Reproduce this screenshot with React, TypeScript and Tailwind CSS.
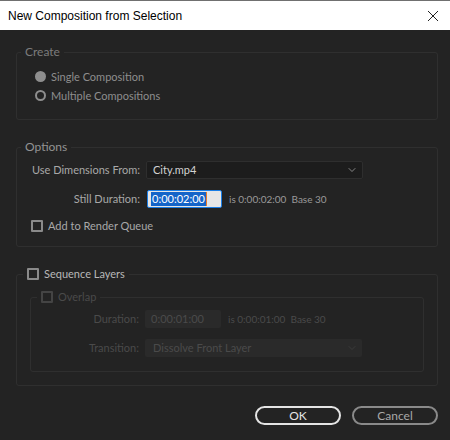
import { ChevronDown } from 'lucide-react';

const body = "font-['Lato','Noto_Sans',sans-serif]";

function Radio({ checked, label }: { checked?: boolean; label: string }) {
  return (
    <div className="flex items-center h-[19px] gap-[5px]">
      {checked ? (
        <span className="w-[11px] h-[11px] rounded-full bg-[#8e8e8e]" />
      ) : (
        <span className="w-[11px] h-[11px] rounded-full border-2 border-[#8e8e8e]" />
      )}
      <span className="text-[#8e8e8e]">{label}</span>
    </div>
  );
}

function Checkbox({ label, color, box }: { label: string; color: string; box: string }) {
  return (
    <div className="flex items-center gap-[5px]">
      <span className={`w-[12px] h-[12px] rounded-[1px] border-2 ${box}`} />
      <span className={color}>{label}</span>
    </div>
  );
}

export default function App() {
  return (
    <div className={`w-[450px] h-[440px] bg-[#232323] overflow-hidden text-[11px] leading-[16px] whitespace-nowrap ${body}`}>
      {/* title bar */}
      <div className="h-[30px] bg-white border-t border-[#707070] flex items-center justify-between pl-[8px] pr-[11px]">
        <span className="text-[12px] text-black font-['Liberation_Sans',sans-serif]">New Composition from Selection</span>
        <svg width="12" height="12" viewBox="0 0 12 12" className="text-[#222]">
          <path d="M1 1 L11 11 M11 1 L1 11" stroke="currentColor" strokeWidth="1" />
        </svg>
      </div>

      <div className="pl-[16px] pr-[12px]">
        {/* Create */}
        <fieldset className="mt-[14px] border border-[#2f2f2f] rounded-[3px]">
          <legend className="ml-[4px] px-[4px] text-[#7c7c7c] text-[12px]">Create</legend>
          <div className="pl-[18px] pt-[7px] pb-[14px]">
            <Radio checked label="Single Composition" />
            <Radio label="Multiple Compositions" />
          </div>
        </fieldset>

        {/* Options */}
        <fieldset className="mt-[19px] border border-[#2f2f2f] rounded-[3px]">
          <legend className="ml-[4px] px-[4px] text-[#939393] text-[12px]">Options</legend>
          <div className="pl-[14px] pt-[6px] pb-[12px]">
            <div className="flex items-center gap-[6px]">
              <span className="w-[109px] text-right text-[#a8a8a8]">Use Dimensions From:</span>
              <div className="w-[217px] h-[18px] bg-[#1c1c1c] border border-[#2e2e2e] rounded-[2px] flex items-center justify-between pl-[6px] pr-[4px]">
                <span className="text-[#d2d2d2]">City.mp4</span>
                <ChevronDown className="w-[12px] h-[12px] text-[#a8a8a8]" strokeWidth={1.5} />
              </div>
            </div>
            <div className="flex items-center gap-[7px] mt-[11px]">
              <span className="w-[109px] text-right text-[#a8a8a8]">Still Duration:</span>
              <div className="w-[75px] h-[18px] bg-[#e6e6e6] border border-[#1a7ee6] rounded-[2px] flex items-center pl-[3px]">
                <span className="bg-[#1464c8] text-white px-[1px] leading-[14px]">0:00:02:00</span>
                <span className="w-[1px] h-[14px] bg-[#e87a2a]" />
              </div>
              <span className="text-[10px] text-[#9a9a9a]">is 0:00:02:00&nbsp;&nbsp;Base 30</span>
            </div>
            <div className="mt-[10px]">
              <Checkbox label="Add to Render Queue" color="text-[#a8a8a8]" box="border-[#8a8a8a]" />
            </div>
          </div>
        </fieldset>

        {/* Sequence Layers */}
        <fieldset className="mt-[19px] border border-[#2f2f2f] rounded-[3px]">
          <legend className="ml-[6px] px-[4px]">
            <Checkbox label="Sequence Layers" color="text-[#b8b8b8]" box="border-[#8a8a8a]" />
          </legend>
          <div className="px-[13px] pt-[7px] pb-[13px]">
            <fieldset className="border border-[#2f2f2f] rounded-[3px]">
              <legend className="ml-[6px] px-[4px]">
                <Checkbox label="Overlap" color="text-[#4a4a4a]" box="border-[#444]" />
              </legend>
              <div className="pt-[5px] pb-[14px]">
                <div className="flex items-center gap-[6px]">
                  <span className="w-[108px] text-right text-[#4a4a4a]">Duration:</span>
                  <div className="w-[76px] h-[18px] bg-[#2a2a2a] rounded-[2px] flex items-center pl-[6px] text-[#4a4a4a]">
                    0:00:01:00
                  </div>
                  <span className="ml-[1px] text-[10px] text-[#4a4a4a]">is 0:00:01:00&nbsp;&nbsp;Base 30</span>
                </div>
                <div className="flex items-center gap-[6px] mt-[11px]">
                  <span className="w-[108px] text-right text-[#4a4a4a]">Transition:</span>
                  <div className="w-[217px] h-[18px] bg-[#2a2a2a] rounded-[2px] flex items-center justify-between pl-[8px] pr-[4px]">
                    <span className="text-[#4a4a4a]">Dissolve Front Layer</span>
                    <ChevronDown className="w-[12px] h-[12px] text-[#404040]" strokeWidth={1.5} />
                  </div>
                </div>
              </div>
            </fieldset>
          </div>
        </fieldset>

        {/* buttons */}
        <div className="flex justify-end gap-[11px] mt-[20px]">
          <button className="w-[86px] h-[19px] rounded-full border-2 border-[#e4e4e4] text-[#e4e4e4] text-[12px] leading-[14px]">OK</button>
          <button className="w-[86px] h-[19px] rounded-full border-2 border-[#8a8a8a] text-[#a8a8a8] text-[12px] leading-[14px]">Cancel</button>
        </div>
      </div>
    </div>
  );
}
